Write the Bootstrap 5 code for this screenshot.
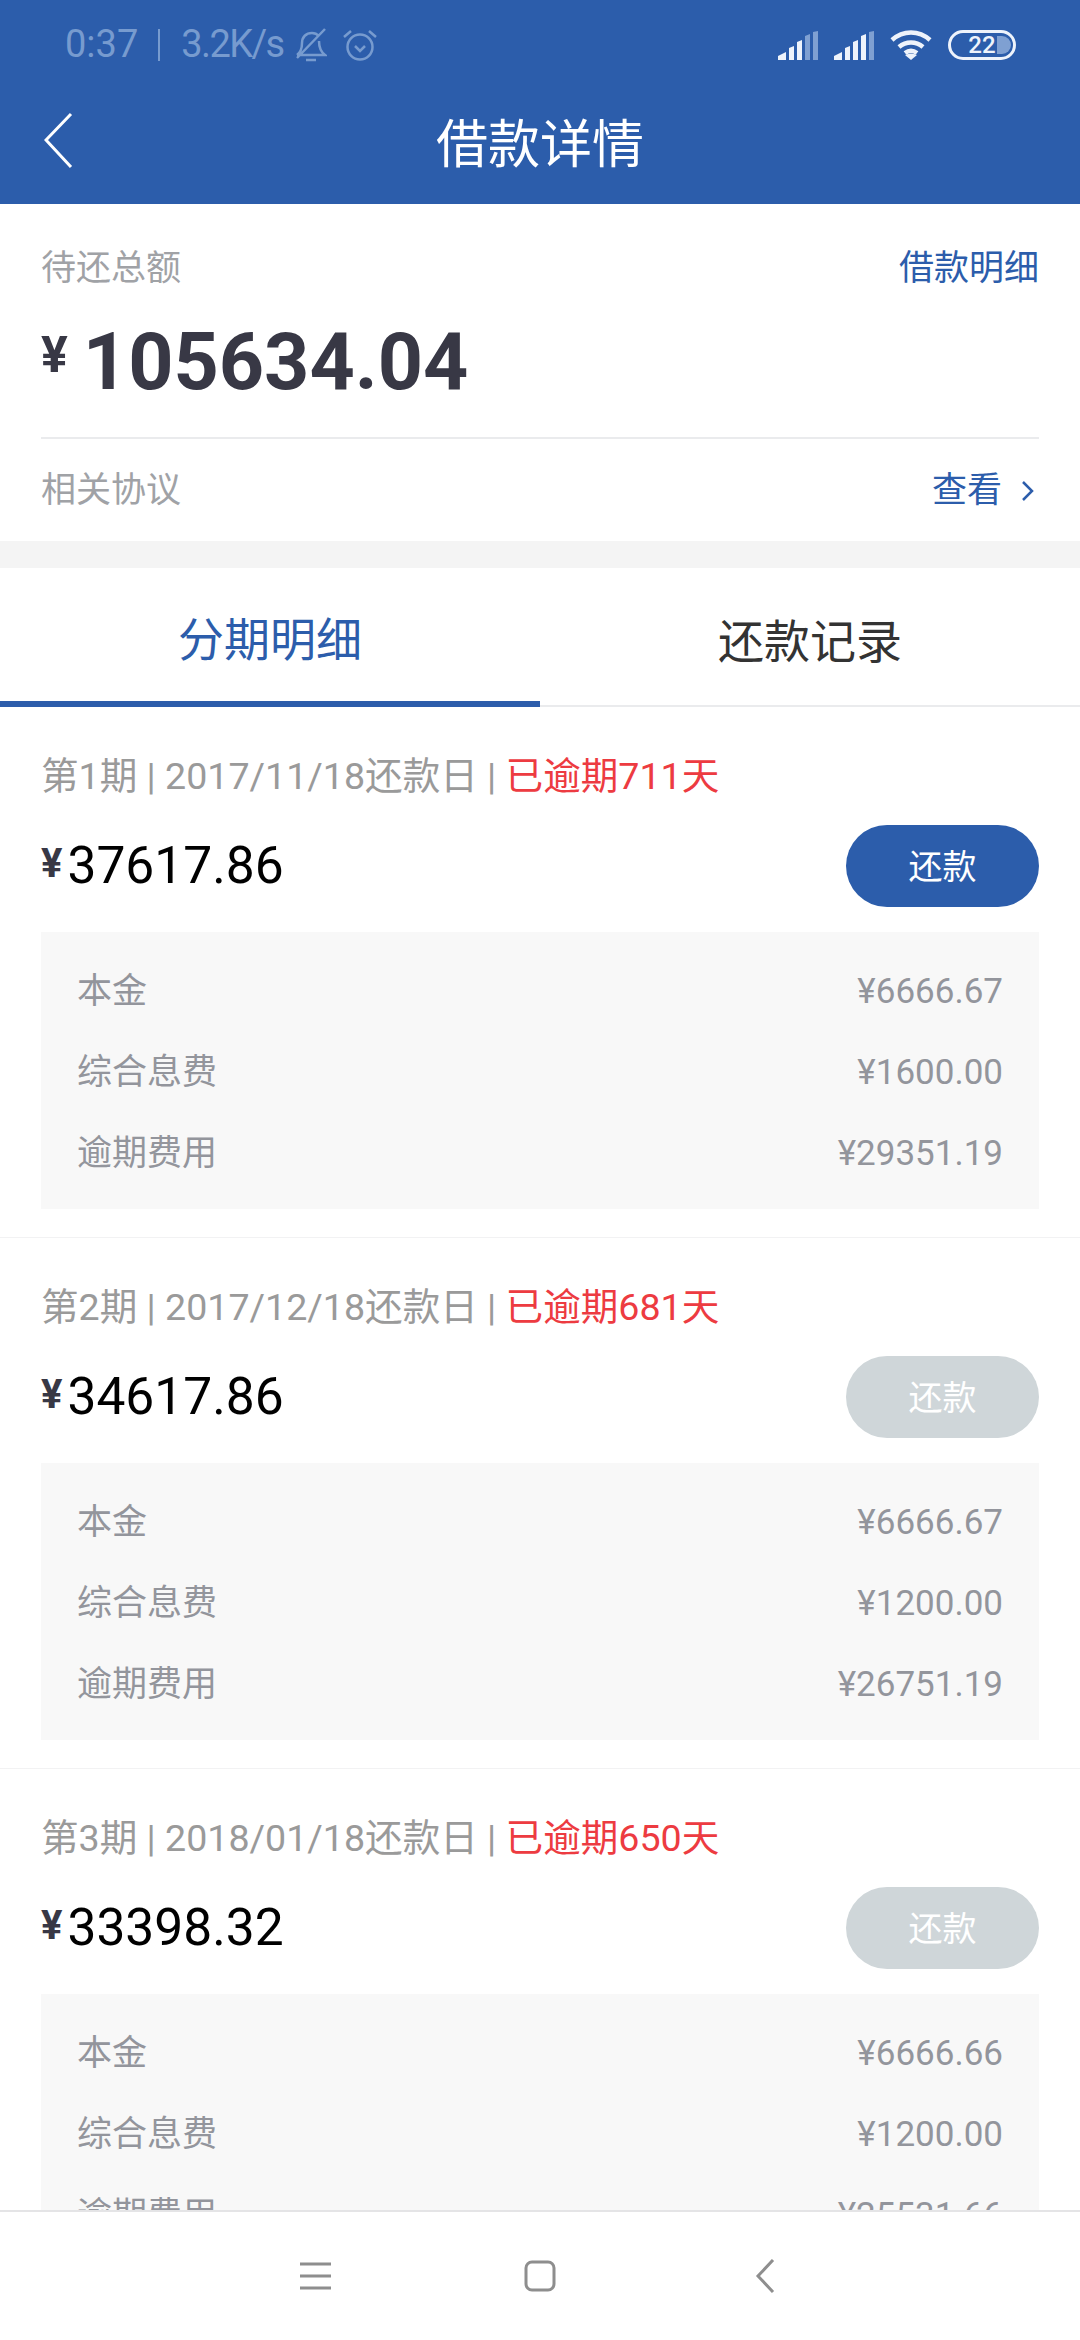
<!DOCTYPE html>
<html lang="zh-CN">

<head>
    <meta charset="UTF-8" />
    <meta name="viewport" content="width=device-width, initial-scale=1.0" />
    <title>借款详情</title>
    <link href="https://cdn.jsdelivr.net/npm/bootstrap@5.3.3/dist/css/bootstrap.min.css" rel="stylesheet">
    <style>
        html, body {
            height: 2340px;
            overflow: hidden;
        }

        body {
            background: #fff;
            font-family: Roboto, "Noto Sans CJK SC", sans-serif;
            font-size: 35px;
            line-height: 1.2;
        }

        .phone {
            width: 1080px;
            height: 2340px;
        }

        .top-bar {
            background: #2c5dab;
            height: 204px;
            flex: none;
        }

        .status-row {
            height: 90px;
            padding: 0 64px 0 65px;
        }

        .status-text {
            color: #779bcf;
            font-size: 38px;
        }

        .status-speed {
            letter-spacing: -1.6px;
        }

        .status-sep {
            width: 2px;
            height: 32px;
            background: #779bcf;
            margin: 0 21px 0 20px;
        }

        .status-bell {
            margin-left: 11px;
        }

        .title-row {
            height: 114px;
            padding-left: 44px;
        }

        .page-title {
            color: #fff;
            font-size: 52px;
            left: 0;
            right: 0;
            top: 25px;
            text-align: center;
        }

        .back-arrow {
            top: 22px;
        }

        .summary {
            height: 337px;
            flex: none;
            padding: 0 41px;
        }

        .summary-head {
            height: 104px;
            padding-top: 44px;
        }

        .label-grey {
            color: #a0a2a6;
        }

        .link-blue {
            color: #2c5dab;
        }

        .total-row {
            height: 129px;
            padding-bottom: 21px;
            color: #383845;
        }

        .yuan-big {
            font-size: 50px;
            font-weight: 700;
            margin-right: 15px;
            margin-top: -14px;
        }

        .total-num {
            font-size: 79px;
            font-weight: 700;
            line-height: 1;
        }

        .agree-row {
            height: 104px;
            border-top: 2px solid #eaebed;
            padding-top: 2px;
        }

        .chevron-more {
            margin-left: 19px;
            margin-right: 4px;
        }

        .gap-band {
            height: 27px;
            flex: none;
            background: #f4f4f4;
        }

        .tab-row {
            height: 139px;
            flex: none;
            border-bottom: 2px solid #eaebed;
            font-size: 46px;
        }

        .tab-item {
            width: 50%;
            height: 137px;
            padding-top: 13px;
            color: #333;
        }

        .tab-item.on {
            color: #2c5dab;
            border-bottom: 6px solid #2c5dab;
            height: 139px;
        }

        .list-wrap {
            overflow: hidden;
            flex: 1 1 auto;
            min-height: 0;
        }

        .period {
            height: 531px;
            padding: 0 41px;
            border-bottom: 1px solid #f2f2f3;
        }

        .period-head {
            height: 111px;
            padding-top: 47px;
            font-size: 37.6px;
            color: #9a9a9a;
            white-space: nowrap;
        }

        .overdue {
            color: #ed3b41;
        }

        .amount-row {
            height: 114px;
            padding-top: 7px;
        }

        .amount-left {
            height: 82px;
        }

        .yuan-small {
            font-size: 40px;
            font-weight: 700;
            color: #383845;
            margin-right: 5px;
            margin-top: -4px;
        }

        .amount-num {
            font-size: 51.5px;
            color: #000;
        }

        .pay-btn {
            width: 193px;
            height: 82px;
            border: 0;
            border-radius: 41px;
            color: #fff;
            font-size: 34px;
            background: #2c5dab;
            padding: 2px 0 0;
        }

        .pay-btn.off {
            background: #cfd6d9;
        }

        .fee-box {
            height: 277px;
            background: #f8f8f8;
            padding: 19px 36px;
            color: #93959c;
        }

        .fee-line {
            height: 81px;
        }

        .nav-bottom {
            height: 130px;
            flex: none;
            background: #fff;
            border-top: 2px solid #e4e4e6;
        }

        .nav-slot {
            width: 225px;
        }
    </style>
</head>

<body>
    <div class="phone d-flex flex-column">
        <div class="top-bar">
            <div class="status-row d-flex align-items-center justify-content-between">
                <div class="d-flex align-items-center status-text">
                    <span>0:37</span>
                    <span class="status-sep"></span>
                    <span class="status-speed">3.2K/s</span>
                    <svg class="status-bell" width="32" height="36" viewBox="0 0 32 36" fill="none" stroke="#779bcf" stroke-width="2.5">
                        <path d="M2 28c4-3 5-6 5-12 0-6 4-10 10-10 3 0 5 1 7 3M24 14c0 7 2 11 6 14H2M2 31 30 2M11 33h10" />
                    </svg>
                    <svg class="ms-3" width="34" height="34" viewBox="0 0 34 34" fill="none" stroke="#779bcf" stroke-width="2.5">
                        <circle cx="17" cy="19" r="12.5" />
                        <path d="M1 9l7-6M33 9l-7-6M12 18l5 5 5-5" />
                    </svg>
                </div>
                <div class="d-flex align-items-center">
                    <svg width="40" height="29" viewBox="0 0 40 29" fill="#eef3fb">
                        <path d="M0 29v-4l8-4v8zM11 29V17l5-2v14zM19 29V11l5-2v20z" />
                        <path d="M27 29V5l5-2v26zM35 29V1l5-1v29z" fill="#7fa0d2" />
                    </svg>
                    <svg class="ms-3" width="40" height="29" viewBox="0 0 40 29" fill="#eef3fb">
                        <path d="M0 29v-4l8-4v8zM11 29V17l5-2v14zM19 29V11l5-2v20zM27 29V5l5-2v26z" />
                        <path d="M35 29V1l5-1v29z" fill="#7fa0d2" />
                    </svg>
                    <svg class="ms-3" width="42" height="30" viewBox="0 0 42 30" fill="none" stroke="#eef3fb" stroke-width="4.5">
                        <path d="M2 10c11-10 27-10 38 0M9 17c7-6 17-6 24 0M15 23c4-3 8-3 12 0" />
                        <path d="M21 30l-6-5c4-2 8-2 12 0z" fill="#eef3fb" stroke="none" />
                    </svg>
                    <svg class="ms-3" width="68" height="30" viewBox="0 0 68 30">
                        <path d="M49 6h5a9 9 0 0 1 0 18h-5z" fill="#7fa0d2" />
                        <rect x="1.5" y="1.5" width="65" height="27" rx="13.5" fill="none" stroke="#eef3fb" stroke-width="3" />
                        <text x="34" y="23" text-anchor="middle" font-family="Roboto" font-weight="500" font-size="24" fill="#eef3fb">22</text>
                    </svg>
                </div>
            </div>
            <div class="title-row position-relative">
                <div class="page-title position-absolute">借款详情</div>
                <svg class="back-arrow position-relative" width="30" height="58" viewBox="0 0 30 58" fill="none" stroke="#fff" stroke-width="3">
                    <path d="M27 2 2 28l25 27" />
                </svg>
            </div>
        </div>

        <div class="summary">
            <div class="summary-head d-flex justify-content-between">
                <span class="label-grey">待还总额</span>
                <span class="link-blue">借款明细</span>
            </div>
            <div class="total-row d-flex align-items-center">
                <span class="yuan-big">¥</span>
                <span class="total-num">105634.04</span>
            </div>
            <div class="agree-row d-flex align-items-center justify-content-between">
                <span class="label-grey">相关协议</span>
                <span class="link-blue d-flex align-items-center">查看
                    <svg class="chevron-more" width="14" height="22" viewBox="0 0 14 22" fill="none" stroke="#2c5dab" stroke-width="2.5">
                        <path d="M2 2l9 9-9 9" />
                    </svg>
                </span>
            </div>
        </div>

        <div class="gap-band"></div>

        <div class="tab-row d-flex">
            <div class="tab-item on d-flex align-items-center justify-content-center">分期明细</div>
            <div class="tab-item d-flex align-items-center justify-content-center">还款记录</div>
        </div>

        <div class="list-wrap" id="periods"></div>

        <div class="nav-bottom d-flex align-items-center justify-content-center">
            <div class="nav-slot d-flex justify-content-center">
                <svg width="31" height="28" viewBox="0 0 31 28" fill="none" stroke="#8e8e8e" stroke-width="3">
                    <path d="M0 2h31M0 14h31M0 26h31" />
                </svg>
            </div>
            <div class="nav-slot d-flex justify-content-center">
                <svg width="32" height="32" viewBox="0 0 32 32" fill="none" stroke="#8e8e8e" stroke-width="3">
                    <rect x="2" y="2" width="28" height="28" rx="6" />
                </svg>
            </div>
            <div class="nav-slot d-flex justify-content-center">
                <svg width="20" height="34" viewBox="0 0 20 34" fill="none" stroke="#8e8e8e" stroke-width="3">
                    <path d="M18 1 3 17l15 16" />
                </svg>
            </div>
        </div>
    </div>

    <script>
        const periods = [
            { n: 1, date: '2017/11/18', late: 711, amount: '37617.86', active: true, fees: ['6666.67', '1600.00', '29351.19'] },
            { n: 2, date: '2017/12/18', late: 681, amount: '34617.86', active: false, fees: ['6666.67', '1200.00', '26751.19'] },
            { n: 3, date: '2018/01/18', late: 650, amount: '33398.32', active: false, fees: ['6666.66', '1200.00', '25531.66'] }
        ];
        const labels = ['本金', '综合息费', '逾期费用'];

        document.getElementById('periods').innerHTML = periods.map(p => `
            <div class="period">
                <div class="period-head">第${p.n}期 | ${p.date}还款日 | <span class="overdue">已逾期${p.late}天</span></div>
                <div class="amount-row d-flex align-items-start justify-content-between">
                    <div class="amount-left d-flex align-items-center">
                        <span class="yuan-small">¥</span><span class="amount-num">${p.amount}</span>
                    </div>
                    <button class="pay-btn ${p.active ? '' : 'off'}">还款</button>
                </div>
                <div class="fee-box">
                    ${labels.map((l, i) => `<div class="fee-line d-flex align-items-center justify-content-between"><span>${l}</span><span>¥${p.fees[i]}</span></div>`).join('')}
                </div>
            </div>`).join('');
    </script>
    <script src="https://cdn.jsdelivr.net/npm/bootstrap@5.3.3/dist/js/bootstrap.bundle.min.js"></script>
</body>

</html>
